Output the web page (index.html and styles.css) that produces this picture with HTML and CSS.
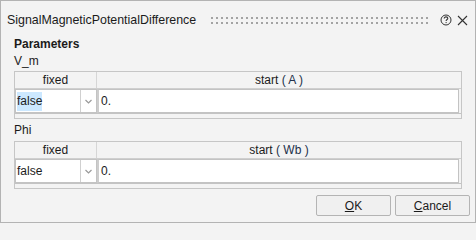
FILE: index.html
```html
<!DOCTYPE html>
<html>
<head>
<meta charset="utf-8">
<link rel="stylesheet" href="styles.css">
</head>
<body>
<div class="window">
  <div class="titlebar">
    <span class="title">SignalMagneticPotentialDifference</span>
    <div class="grip">
      <svg width="220" height="7" viewBox="0 0 220 7">
        <defs>
          <pattern id="dots" width="5" height="5" patternUnits="userSpaceOnUse">
            <rect x="0" y="0" width="2" height="2" fill="#a3a3a3"/>
          </pattern>
        </defs>
        <rect x="0" y="0" width="220" height="7" fill="url(#dots)"/>
      </svg>
    </div>
    <svg class="help" width="12" height="12" viewBox="0 0 12 12">
      <circle cx="6" cy="6" r="5" fill="none" stroke="#333" stroke-width="1"/>
      <path d="M4.2 4.6 C4.2 3.4 5 2.9 6 2.9 C7 2.9 7.8 3.5 7.8 4.4 C7.8 5.4 6.1 5.6 6.1 6.9" fill="none" stroke="#333" stroke-width="1.1"/>
      <rect x="5.6" y="8" width="1" height="1.1" fill="#333"/>
    </svg>
    <svg class="close" width="11" height="11" viewBox="0 0 11 11">
      <path d="M1 1 L10 10 M10 1 L1 10" stroke="#333" stroke-width="1.1" fill="none"/>
    </svg>
  </div>
  <div class="content">
    <div class="section">Parameters</div>
    <div class="label">V_m</div>
    <div class="ptable">
      <div class="thead">
        <div class="th col-fixed">fixed</div>
        <div class="th col-start">start <span class="unit">( A )</span></div>
      </div>
      <div class="trow">
        <div class="select"><span class="sel-text"><span class="hl">false</span></span><span class="arrow"><svg width="7" height="5" viewBox="0 0 7 5"><path d="M0.5 1 L3.5 4 L6.5 1" fill="none" stroke="#999" stroke-width="1.2"/></svg></span></div>
        <div class="value">0.</div>
      </div>
      <div class="tfoot"></div>
    </div>
    <div class="label label-2">Phi</div>
    <div class="ptable">
      <div class="thead">
        <div class="th col-fixed">fixed</div>
        <div class="th col-start">start <span class="unit">( Wb )</span></div>
      </div>
      <div class="trow">
        <div class="select"><span class="sel-text">false</span><span class="arrow"><svg width="7" height="5" viewBox="0 0 7 5"><path d="M0.5 1 L3.5 4 L6.5 1" fill="none" stroke="#999" stroke-width="1.2"/></svg></span></div>
        <div class="value">0.</div>
      </div>
      <div class="tfoot"></div>
    </div>
  </div>
  <div class="buttons">
    <button class="btn"><u>O</u>K</button>
    <button class="btn"><u>C</u>ancel</button>
  </div>
</div>
</body>
</html>
```
FILE: styles.css
```css
html, body {
  margin: 0;
  padding: 0;
  background: #f3f3f3;
}
body {
  font-family: "Liberation Sans", Arial, sans-serif;
  font-size: 12px;
  color: #1b1b1b;
}
.window {
  width: 476px;
  height: 223px;
  box-sizing: border-box;
  border: 1px solid #b3b3b3;
  background: #f3f3f3;
  display: flex;
  flex-direction: column;
}
.titlebar {
  height: 34px;
  display: flex;
  align-items: center;
  padding: 4px 0 0 6px;
  box-sizing: border-box;
}
.title {
  font-size: 12.4px;
  line-height: 15px;
  white-space: nowrap;
}
.grip {
  margin-left: 15px;
  width: 220px;
  height: 7px;
  display: flex;
}
.help {
  margin-left: 9px;
}
.close {
  margin-left: 5px;
}
.content {
  flex: 1;
  padding: 2px 0 0 13px;
}
.section {
  font-weight: bold;
  line-height: 15px;
}
.label {
  line-height: 15px;
  margin-top: 2px;
  margin-bottom: 2px;
}
.label-2 {
  margin-top: 4px;
  margin-bottom: 3px;
}
.ptable {
  width: 448px;
  height: 48px;
  box-sizing: border-box;
  border: 1px solid #c6c6c6;
  background: #f3f3f3;
  display: flex;
  flex-direction: column;
}
.thead {
  display: flex;
  height: 17px;
  box-sizing: border-box;
  border-bottom: 1px solid #cfcfcf;
}
.th {
  line-height: 16px;
  text-align: center;
}
.col-fixed {
  width: 82px;
  box-sizing: border-box;
  border-right: 1px solid #d6d6d6;
}
.col-start {
  flex: 1;
}
.unit {
  color: #22304a;
}
.trow {
  display: flex;
  height: 25px;
  box-sizing: border-box;
  border-bottom: 1px solid #c3c3c3;
  padding-right: 2px;
}
.select {
  width: 82px;
  box-sizing: border-box;
  border: 1px solid #c3c3c3;
  background: #fff;
  display: flex;
}
.sel-text {
  flex: 1;
  line-height: 22px;
  padding-left: 1px;
}
.hl {
  background: #cce8ff;
  padding: 2px 0 3px;
}
.arrow {
  width: 15px;
  border-left: 1px solid #d0d0d0;
  display: flex;
  align-items: center;
  justify-content: center;
}
.value {
  flex: 1;
  box-sizing: border-box;
  border: 1px solid #c3c3c3;
  border-left: 2px solid #cdcdcd;
  background: #fff;
  line-height: 22px;
  padding-left: 2px;
}
.tfoot {
  flex: 1;
}
.buttons {
  display: flex;
  justify-content: flex-end;
  gap: 4px;
  padding: 0 5px 6px 0;
}
.btn {
  width: 75px;
  height: 21px;
  box-sizing: border-box;
  border: 1px solid #b4b4b4;
  border-radius: 2px;
  background: #f0f0f0;
  font-family: "Liberation Sans", Arial, sans-serif;
  font-size: 12px;
  color: #1b1b1b;
  padding: 0;
}
```
